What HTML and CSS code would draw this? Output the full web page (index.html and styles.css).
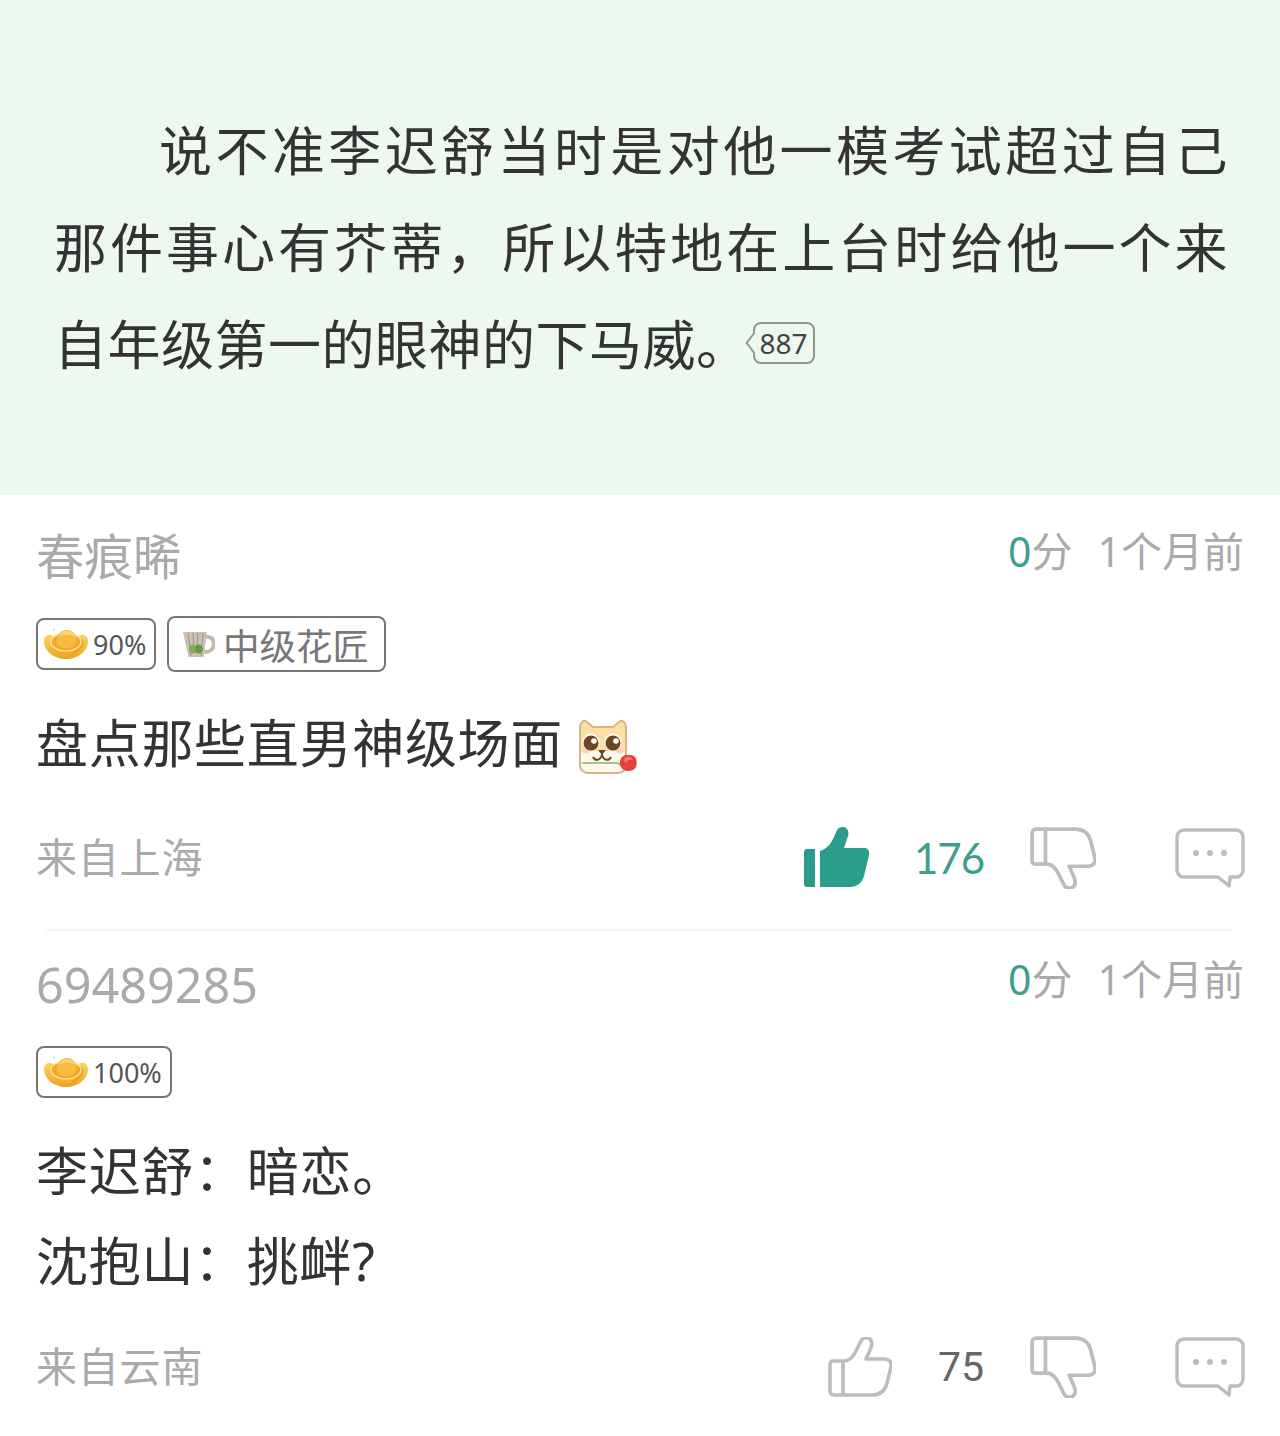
FILE: index.html
```html
<!DOCTYPE html>
<html lang="zh-CN">
<head>
  <meta charset="UTF-8">
  <title>段评</title>
  <link rel="stylesheet" href="styles.css">
</head>
<body>
  <svg class="sprite" aria-hidden="true">
    <defs>
      <linearGradient id="goldBody" x1="0" y1="0" x2="0" y2="1">
        <stop offset="0" stop-color="#fcd55e"/>
        <stop offset="1" stop-color="#eda21f"/>
      </linearGradient>
      <symbol id="ingot" viewBox="0 0 44 32">
        <circle cx="10" cy="1.5" r="1" fill="#f6cf6a"/>
        <path d="M0 13C0 8 5 5 9 8C12 10 32 10 35 8C39 5 44 8 44 13C44 23 34 31 22 31C10 31 0 23 0 13Z" fill="url(#goldBody)"/>
        <path d="M35 11C39 11 40 13 39 17C36 24 29 28 23 29C31 25 35 18 35 11Z" fill="#ee9f1e"/>
        <ellipse cx="22" cy="14" rx="15" ry="9" fill="#f2a92a"/>
        <ellipse cx="22" cy="14" rx="15" ry="9" fill="none" stroke="#fde38f" stroke-width="1.6"/>
        <path d="M13 13C13 6 17 2 23 2C29 2 32 6 32 13C32 18 27 20 22 20C17 20 13 18 13 13Z" fill="#f7bb42"/>
        <path d="M15 9C16 5 19 3 23 3C27 3 30 5 31 9C27 6 19 6 15 9Z" fill="#fbd469"/>
      </symbol>
      <symbol id="thumb-line" viewBox="0 0 64 60">
        <path d="M5 24H16C22 24 25 20 28 14L33 4C35 0 40 0 42 2C45 5 44 9 42 13L38 22H56C61 22 64 25 63 30L59 46C57 54 52 58 44 58H6C3 58 2 56 2 53V28C2 25 3 24 5 24ZM15 24V58" fill="none" stroke="#bdbdbd" stroke-width="3.6" stroke-linejoin="round"/>
      </symbol>
      <symbol id="thumb-fill" viewBox="0 0 66 62">
        <path d="M3 22H11V60H3C1 60 0 59 0 57V25C0 23 1 22 3 22Z" fill="#2c9c8c"/>
        <path d="M16 24C22 22 26 18 29 12L33 3C35 0 39 -1 42 1C45 3 45 8 43 12L40 21H60C64 21 66 24 65 28L60 49C58 56 53 60 46 60H16Z" fill="#2c9c8c"/>
      </symbol>
      <symbol id="bubble" viewBox="0 0 70 60">
        <path d="M9 2H61C65 2 68 5 68 9V42C68 46 65 49 61 49H55L54 58L43 49H9C5 49 2 46 2 42V9C2 5 5 2 9 2Z" fill="none" stroke="#bdbdbd" stroke-width="3.4" stroke-linejoin="round"/>
        <circle cx="21" cy="25" r="3" fill="#bdbdbd"/>
        <circle cx="35" cy="25" r="3" fill="#bdbdbd"/>
        <circle cx="49" cy="25" r="3" fill="#bdbdbd"/>
      </symbol>
    </defs>
  </svg>

  <section class="reader">
    <p class="paragraph">说不准李迟舒当时是对他一模考试超过自己那件事心有芥蒂，所以特地在上台时给他一个来自年级第一的眼神的下马威。<span class="para-count">887</span></p>
  </section>

  <section class="comments">
    <article class="comment">
      <header class="comment-head">
        <span class="name">春痕晞</span>
        <span class="meta"><b class="score">0</b>分<span class="time">1个月前</span></span>
      </header>
      <div class="tags">
        <span class="tag"><svg class="ingot"><use href="#ingot"/></svg>90%</span>
        <span class="tag tag-title">
          <svg class="cup" viewBox="0 0 32 27">
            <path d="M19 6H24C29 6 31 9 31 13C31 18 27 21 21 21" fill="none" stroke="#c4b9ac" stroke-width="4"/>
            <path d="M0 1H24L21 24C21 26 20 26 18 26H8C6 26 5 26 5 24Z" fill="#cbc1b5"/>
            <path d="M5 2L8 25M10 2L11 16M15 2L14 16M20 2L18 25" stroke="#9d9387" stroke-width="1"/>
            <ellipse cx="10" cy="18" rx="4" ry="4.5" fill="#7fae56"/>
            <ellipse cx="16" cy="18" rx="4" ry="4.5" fill="#659a46"/>
          </svg>中级花匠</span>
      </div>
      <p class="body body-emoji">盘点那些直男神级场面<svg class="dog" viewBox="0 0 60 56">
          <path d="M2 10C2 3 6 0 9 3L15 8H35L41 3C44 0 48 3 48 10V46C48 51 44 54 39 54H11C6 54 2 51 2 46Z" fill="#fcdfa4" stroke="#d8b388" stroke-width="2"/>
          <path d="M3 32H47V46C47 50 44 53 39 53H11C6 53 3 50 3 46Z" fill="#fdf8ea"/>
          <ellipse cx="8" cy="32" rx="4" ry="2.5" fill="#fbcfc0"/>
          <ellipse cx="42" cy="32" rx="4" ry="2.5" fill="#fbcfc0"/>
          <circle cx="13" cy="23" r="8.5" fill="#fff"/>
          <circle cx="35" cy="23" r="8.5" fill="#fff"/>
          <circle cx="13" cy="24" r="7.5" fill="#6d4524"/>
          <circle cx="35" cy="24" r="7.5" fill="#6d4524"/>
          <circle cx="16" cy="22" r="2.8" fill="#fff"/>
          <circle cx="38" cy="22" r="2.8" fill="#fff"/>
          <path d="M20 31H28L24 36Z" fill="#6d4524"/>
          <path d="M15 38C17 42 22 42 24 36C26 42 31 42 33 38" fill="none" stroke="#6d4524" stroke-width="2"/>
          <path d="M4 44H40L47 50" fill="none" stroke="#8bae74" stroke-width="1.6"/>
          <path d="M44 38C47 35 54 35 57 38C60 42 59 49 55 51C51 53 45 52 43 48C41 45 42 40 44 38Z" fill="#e5433a"/>
          <path d="M47 39C50 37 54 38 55 41C52 40 49 41 48 44C46 43 46 41 47 39Z" fill="#f27a6c"/>
        </svg></p>
      <footer class="comment-foot">
        <span class="place">来自上海</span>
        <div class="actions">
          <svg class="icon-up-fill"><use href="#thumb-fill"/></svg>
          <span class="count count-on">176</span>
          <svg class="icon-down"><use href="#thumb-line"/></svg>
          <svg class="icon-reply"><use href="#bubble"/></svg>
        </div>
      </footer>
    </article>

    <hr class="divider">

    <article class="comment">
      <header class="comment-head">
        <span class="name">69489285</span>
        <span class="meta"><b class="score">0</b>分<span class="time">1个月前</span></span>
      </header>
      <div class="tags">
        <span class="tag tag-wide"><svg class="ingot"><use href="#ingot"/></svg>100%</span>
      </div>
      <p class="body">李迟舒：暗恋。<br>沈抱山：挑衅?</p>
      <footer class="comment-foot">
        <span class="place">来自云南</span>
        <div class="actions">
          <svg class="icon-up"><use href="#thumb-line"/></svg>
          <span class="count">75</span>
          <svg class="icon-down"><use href="#thumb-line"/></svg>
          <svg class="icon-reply"><use href="#bubble"/></svg>
        </div>
      </footer>
    </article>
  </section>
</body>
</html>
```

FILE: styles.css
```css
body {
  margin: 0;
  background: #fff;
  color: #333;
  font-family: "Noto Sans", "Noto Sans CJK SC", sans-serif;
}
.sprite {
  display: block;
  width: 0;
  height: 0;
}

.reader {
  background: #edf9ef;
  height: 495px;
  box-sizing: border-box;
  padding: 102px 52px 0 54px;
}
.paragraph {
  margin: 0;
  font-size: 53px;
  line-height: 97px;
  letter-spacing: 0.5px;
  text-indent: 105px;
  text-align: justify;
}
.para-count {
  display: inline-block;
  position: relative;
  box-sizing: border-box;
  width: 62px;
  height: 42px;
  margin-left: 3px;
  border: 2px solid #8b998d;
  border-radius: 8px;
  font-size: 28px;
  line-height: 38px;
  letter-spacing: 0;
  text-indent: 0;
  text-align: center;
  color: #444;
  vertical-align: 11px;
}
.para-count::before {
  content: "";
  position: absolute;
  left: -8px;
  top: 12px;
  width: 12px;
  height: 12px;
  background: #edf9ef;
  border-left: 2px solid #8b998d;
  border-bottom: 2px solid #8b998d;
  transform: rotate(45deg) skew(8deg, 8deg);
}

.comments {
  padding: 0 36px;
}
.comment {
  padding-top: 31px;
}
.divider + .comment {
  padding-top: 23px;
}
.comment-head {
  display: flex;
  justify-content: space-between;
  height: 60px;
}
.name {
  font-size: 48.5px;
  line-height: 60px;
  color: #aaa;
}
.meta {
  font-size: 41px;
  line-height: 50px;
  color: #aaa;
}
.score {
  font-weight: 400;
  color: #3f9e90;
}
.time {
  margin-left: 25px;
}

.tags {
  display: flex;
  align-items: center;
  gap: 11px;
  height: 56px;
  margin-top: 30px;
}
.tag {
  display: flex;
  align-items: center;
  box-sizing: border-box;
  width: 120px;
  height: 52px;
  padding-left: 6px;
  border: 2px solid #777;
  border-radius: 8px;
  font-size: 27px;
  color: #555;
}
.tag-wide {
  width: 136px;
}
.tag-title {
  width: 219px;
  height: 56px;
  padding-left: 14px;
  font-size: 36.5px;
  color: #777;
}
.ingot {
  width: 44px;
  height: 32px;
  margin-right: 5px;
}
.cup {
  width: 32px;
  height: 27px;
  margin-right: 8px;
}

.body {
  margin: 26px 0 0;
  font-size: 52px;
  line-height: 90px;
  letter-spacing: 0.7px;
}
.body-emoji {
  height: 90px;
  margin-bottom: 39px;
}
.dog {
  width: 60px;
  height: 56px;
  margin-left: 15px;
  vertical-align: -12px;
}

.comment-foot {
  display: flex;
  justify-content: space-between;
  align-items: center;
  height: 62px;
  margin-top: 30px;
}
.body-emoji + .comment-foot {
  margin-top: 0;
}
.place {
  margin-bottom: 6px;
  font-size: 41px;
  letter-spacing: 0.8px;
  color: #aaa;
}
.actions {
  display: flex;
  align-items: center;
  margin-right: -1px;
}
.count {
  margin: 0 46px;
  font-family: "Roboto", sans-serif;
  font-size: 41px;
  color: #666;
}
.count-on {
  margin-left: 44px;
  font-family: "Lato", sans-serif;
  font-size: 42px;
  letter-spacing: -1px;
  color: #3f9e90;
}
.icon-up-fill {
  width: 66px;
  height: 62px;
}
.icon-up {
  width: 64px;
  height: 60px;
}
.icon-down {
  width: 66px;
  height: 62px;
  transform: scaleY(-1);
}
.icon-reply {
  width: 70px;
  height: 60px;
  margin-left: 79px;
}

.divider {
  height: 2px;
  margin: 40px 12px 0 10px;
  border: 0;
  background: #f4f4f4;
}
```
